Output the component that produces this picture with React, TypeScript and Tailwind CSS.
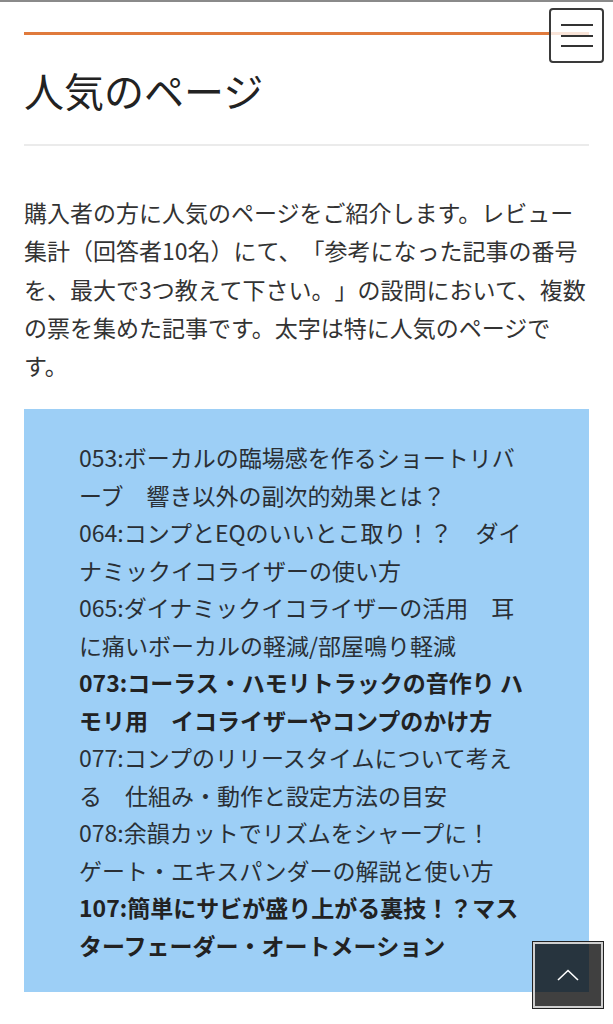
import React from "react";

const items: { lines: string[]; bold?: boolean }[] = [
  { lines: ["053:ボーカルの臨場感を作るショートリバ", "ーブ　響き以外の副次的効果とは？"] },
  { lines: ["064:コンプとEQのいいとこ取り！？　ダイ", "ナミックイコライザーの使い方"] },
  { lines: ["065:ダイナミックイコライザーの活用　耳", "に痛いボーカルの軽減/部屋鳴り軽減"] },
  { lines: ["073:コーラス・ハモリトラックの音作り ハ", "モリ用　イコライザーやコンプのかけ方"], bold: true },
  { lines: ["077:コンプのリリースタイムについて考え", "る　仕組み・動作と設定方法の目安"] },
  { lines: ["078:余韻カットでリズムをシャープに！", "ゲート・エキスパンダーの解説と使い方"] },
  { lines: ["107:簡単にサビが盛り上がる裏技！？マス", "ターフェーダー・オートメーション"], bold: true },
];

export default function App() {
  return (
    <div className="min-h-[1024px] bg-white border-t-2 border-[#8a8a8a] font-['Noto_Sans_CJK_JP','Noto_Sans',sans-serif] text-[#333] [text-spacing-trim:space-all]">
      <div className="px-[24px] pt-[30px] pb-[40px]">
        <div className="border-t-[3px] border-[#e07a3c]" />
        <h1 className="mt-[25px] pb-[24px] border-b-2 border-[#ebebeb] text-[40px] leading-[60px] font-normal text-[#222]">
          人気のページ
        </h1>
        <p className="mt-[47px] text-[23px] leading-[38.3px] tracking-[0px]">
          購入者の方に人気のページをご紹介します。レビュー
          <br />
          集計（回答者10名）にて、「参考になった記事の番号
          <br />
          を、最大で3つ教えて下さい。」の設問において、複数
          <br />
          の票を集めた記事です。太字は特に人気のページで
          <br />
          す。
        </p>
        <div className="mt-[25px] bg-[#9dcff6] pl-[55px] pr-[40px] pt-[30px] pb-[28px]">
          <ul className="text-[23px] leading-[37.5px] text-[#2a2f35]">
            {items.map((it, i) => (
              <li key={i} className={it.bold ? "font-bold text-[#222]" : ""}>
                {it.lines.map((l, j) => (
                  <span key={j} className="block whitespace-nowrap">
                    {l}
                  </span>
                ))}
              </li>
            ))}
          </ul>
        </div>
      </div>

      <button className="fixed top-[8px] right-[9px] w-[55px] h-[55px] rounded-[4px] border-2 border-[#3a3a3a] bg-white/80 flex flex-col items-center justify-center gap-[8.5px]">
        <span className="block w-[32px] h-[2px] bg-[#333]" />
        <span className="block w-[32px] h-[2px] bg-[#333]" />
        <span className="block w-[32px] h-[2px] bg-[#333]" />
      </button>

      <button className="fixed right-[9px] bottom-[15px] w-[72px] h-[68px] border border-[#222] bg-black/75 p-0">
        <div className="w-full h-full border-2 border-[#cfcfcf] flex items-center justify-center">
          <svg width="22" height="12" viewBox="0 0 22 12" fill="none">
            <path d="M1 11 L11 1.5 L21 11" stroke="white" strokeWidth="1.6" />
          </svg>
        </div>
      </button>
    </div>
  );
}
